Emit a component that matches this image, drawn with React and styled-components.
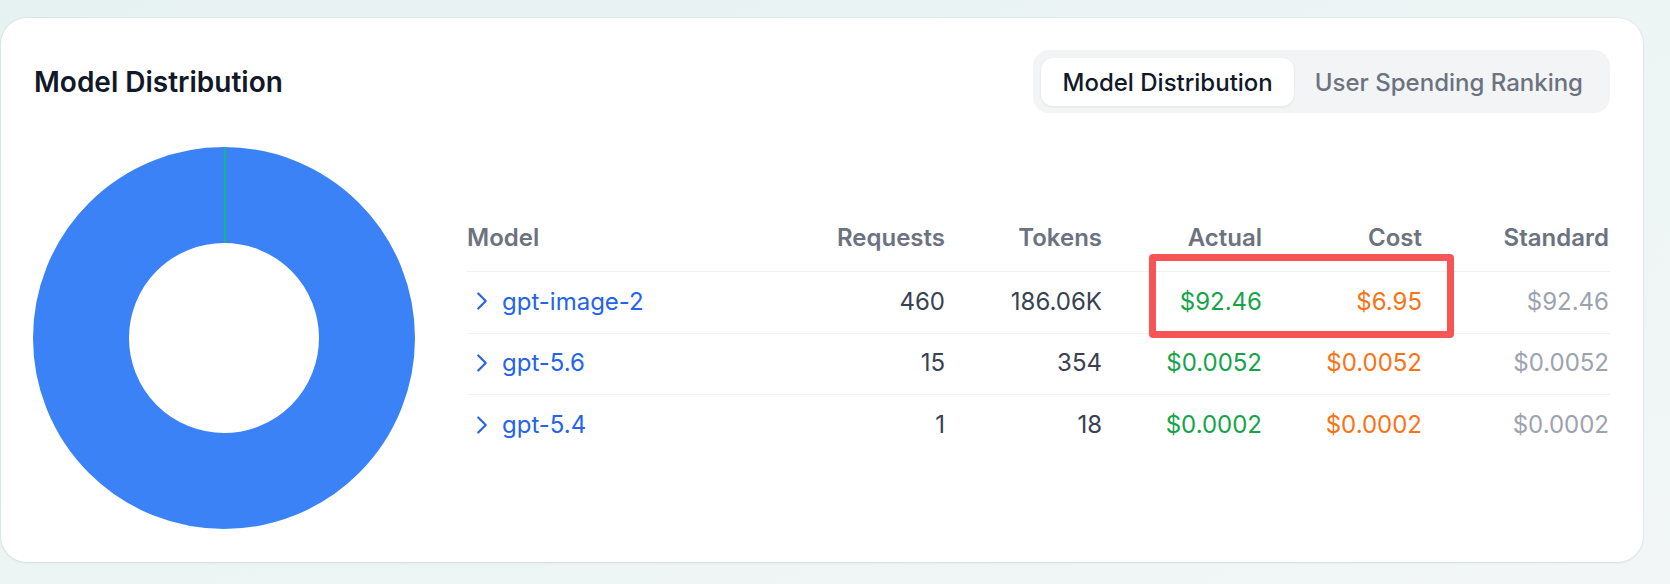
import React from 'react';
import styled, { createGlobalStyle } from 'styled-components';
import { ChevronRight } from 'lucide-react';

const GlobalStyle = createGlobalStyle`
    html, body {
        margin: 0;
        padding: 0;
    }

    body {
        font-family: Inter, "Noto Sans", sans-serif;
        background: linear-gradient(160deg, #e6f1f1 0%, #eef5f5 60%, #f2f6f6 100%);
        min-height: 100vh;
    }
`;

const models = [
    { name: 'gpt-image-2', requests: '460', tokens: '186.06K', actual: '$92.46', cost: '$6.95', standard: '$92.46' },
    { name: 'gpt-5.6', requests: '15', tokens: '354', actual: '$0.0052', cost: '$0.0052', standard: '$0.0052' },
    { name: 'gpt-5.4', requests: '1', tokens: '18', actual: '$0.0002', cost: '$0.0002', standard: '$0.0002' },
];

function Donut() {
    const size = 382;
    const c = size / 2;
    const outer = 191;
    const inner = 95;
    const mid = (outer + inner) / 2;

    return (
        <svg width={size} height={size} viewBox={`0 0 ${size} ${size}`}>
            <circle cx={c} cy={c} r={mid} fill="none" stroke="#3b82f6" strokeWidth={outer - inner} />
            <line x1={c + 1} y1={c - outer} x2={c + 1} y2={c - inner} stroke="#10b981" strokeWidth="2" />
        </svg>
    );
}

function App() {
    return (
        <>
            <GlobalStyle />
            <Page>
                <Card>
                    <Header>
                        <Title>Model Distribution</Title>
                        <Tabs>
                            <Tab $active>Model Distribution</Tab>
                            <Tab>User Spending Ranking</Tab>
                        </Tabs>
                    </Header>

                    <Body>
                        <ChartBox>
                            <Donut />
                        </ChartBox>

                        <TableWrap>
                            <HeadRow>
                                <HeadCell>Model</HeadCell>
                                <HeadCell $right>Requests</HeadCell>
                                <HeadCell $right>Tokens</HeadCell>
                                <HeadCell $right>Actual</HeadCell>
                                <HeadCell $right>Cost</HeadCell>
                                <HeadCell $right>Standard</HeadCell>
                            </HeadRow>

                            {models.map((m) => (
                                <Row key={m.name}>
                                    <ModelCell>
                                        <ChevronRight size={30} strokeWidth={1.7} />
                                        <span>{m.name}</span>
                                    </ModelCell>
                                    <Cell>{m.requests}</Cell>
                                    <Cell>{m.tokens}</Cell>
                                    <Cell $tone="actual">{m.actual}</Cell>
                                    <Cell $tone="cost">{m.cost}</Cell>
                                    <Cell $tone="standard">{m.standard}</Cell>
                                </Row>
                            ))}

                            <Highlight />
                        </TableWrap>
                    </Body>
                </Card>
            </Page>
        </>
    );
}

export default App;

const tones = {
    actual: '#16a34a',
    cost: '#f97316',
    standard: '#9ca3af',
};

const Page = styled.div`
    padding: 18px 27px 0 1px;
`;

const Card = styled.div`
    width: 1642px;
    box-sizing: border-box;
    background: #ffffff;
    border-radius: 26px;
    padding: 32px 32px 33px 32px;
    box-shadow: 0 1px 3px rgba(15, 23, 42, 0.08), 0 0 0 1px rgba(15, 23, 42, 0.03);
`;

const Header = styled.div`
    display: flex;
    align-items: center;
    justify-content: space-between;
    padding-right: 1px;
`;

const Title = styled.h2`
    margin: 0;
    font-size: 28px;
    line-height: 36px;
    font-weight: 600;
    color: #111827;
    padding-left: 1px;
`;

const Tabs = styled.div`
    display: flex;
    padding: 8px 6px 7px 8px;
    background: #f3f4f6;
    border-radius: 16px;
`;

const Tab = styled.div`
    height: 48px;
    display: flex;
    align-items: center;
    padding: 0 21px;
    border-radius: 12px;
    font-size: 24px;
    font-weight: 500;
    color: ${(p) => (p.$active ? '#111827' : '#6b7280')};
    background: ${(p) => (p.$active ? '#ffffff' : 'transparent')};
    box-shadow: ${(p) => (p.$active ? '0 1px 3px rgba(15, 23, 42, 0.08)' : 'none')};
`;

const Body = styled.div`
    display: flex;
    align-items: center;
    gap: 52px;
    margin-top: 34px;
`;

const ChartBox = styled.div`
    width: 382px;
    height: 382px;
    flex-shrink: 0;
    display: flex;
`;

const TableWrap = styled.div`
    position: relative;
    flex: 1;
    margin-right: 1px;
`;

const grid = `
    display: grid;
    grid-template-columns: 1fr 160px 157px 160px 160px 187px;
    align-items: center;
`;

const HeadRow = styled.div`
    ${grid}
    padding-bottom: 15px;
`;

const HeadCell = styled.div`
    font-size: 24px;
    line-height: 36px;
    font-weight: 600;
    color: #6b7280;
    text-align: ${(p) => (p.$right ? 'right' : 'left')};
    padding-right: ${(p) => (p.$right ? '1px' : '0')};
`;

const Row = styled.div`
    ${grid}
    height: 58.8px;
    padding-bottom: 2px;
    box-sizing: content-box;
    border-top: 1px solid #f0f1f3;
`;

const ModelCell = styled.div`
    display: flex;
    align-items: center;
    gap: 5px;
    font-size: 24px;
    color: #2563eb;

    svg {
        flex-shrink: 0;
    }
`;

const Cell = styled.div`
    font-size: 24px;
    text-align: right;
    padding-right: 1px;
    color: ${(p) => tones[p.$tone] || '#374151'};
`;

const Highlight = styled.div`
    position: absolute;
    left: 682px;
    top: 34px;
    width: 305px;
    height: 84px;
    box-sizing: border-box;
    border: 7px solid #f75555;
    border-radius: 4px;
    pointer-events: none;
`;
